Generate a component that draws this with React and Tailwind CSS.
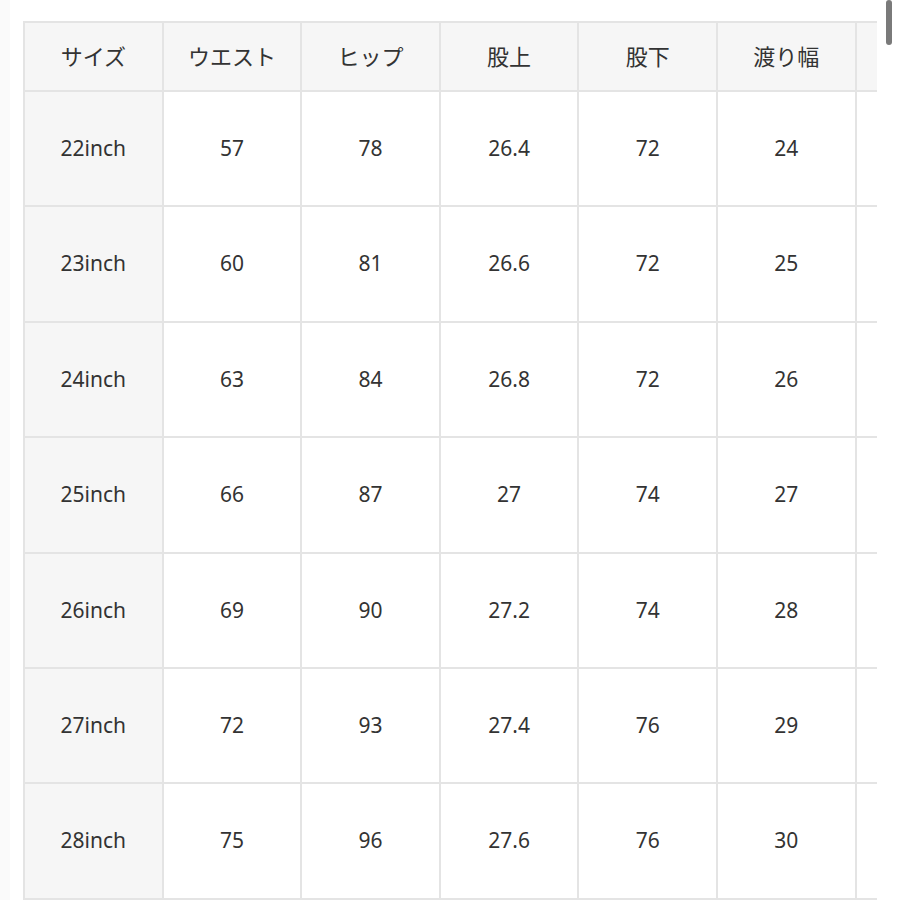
import React from 'react';

const headers = ['サイズ', 'ウエスト', 'ヒップ', '股上', '股下', '渡り幅', ''];

const rows = [
    ['22inch', '57', '78', '26.4', '72', '24', ''],
    ['23inch', '60', '81', '26.6', '72', '25', ''],
    ['24inch', '63', '84', '26.8', '72', '26', ''],
    ['25inch', '66', '87', '27', '74', '27', ''],
    ['26inch', '69', '90', '27.2', '74', '28', ''],
    ['27inch', '72', '93', '27.4', '76', '29', ''],
    ['28inch', '75', '96', '27.6', '76', '30', ''],
];

const font = { fontFamily: '"Noto Sans", "Noto Sans CJK JP", sans-serif' };

const App = () => {
    return (
        <div className="relative w-[900px] h-[900px] bg-white overflow-hidden text-[#333]" style={font}>
            <div className="absolute left-0 top-0 w-[10px] h-full bg-[#fafafa]" />
            <div className="pt-[21px] pl-[23px]">
                <div className="w-[854px] overflow-hidden">
                    <table className="table-fixed border-collapse w-[970px]">
                        <colgroup>
                            {headers.map((h, i) => (
                                <col key={i} className="w-[138.6px]" />
                            ))}
                        </colgroup>
                        <thead>
                            <tr className="h-[69px]">
                                {headers.map((h, i) => (
                                    <th
                                        key={i}
                                        className="border-2 border-[#e4e4e4] bg-[#f6f6f6] font-normal text-[22px] text-center"
                                    >
                                        {h}
                                    </th>
                                ))}
                            </tr>
                        </thead>
                        <tbody>
                            {rows.map((r) => (
                                <tr key={r[0]} className="h-[115.4px]">
                                    {r.map((c, i) => (
                                        <td
                                            key={i}
                                            className={`border-2 border-[#e4e4e4] text-center text-[21px] ${i === 0 ? 'bg-[#f6f6f6]' : 'bg-white'}`}
                                        >
                                            {c}
                                        </td>
                                    ))}
                                </tr>
                            ))}
                        </tbody>
                    </table>
                </div>
            </div>
            <div className="absolute left-[886px] top-0 w-[6px] h-[45px] rounded-full bg-[#7a7a7a]" />
        </div>
    );
};

export default App;
